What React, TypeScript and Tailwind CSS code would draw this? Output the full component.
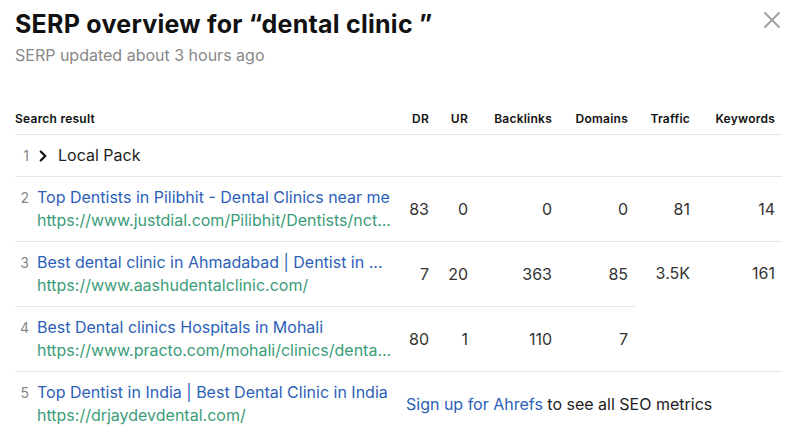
import { X, ChevronRight } from "lucide-react";

type Row = {
  n: number;
  title: string;
  url: string;
  dr: string;
  ur: string;
  backlinks: string;
  domains: string;
};

const rows: Row[] = [
  {
    n: 2,
    title: "Top Dentists in Pilibhit - Dental Clinics near me",
    url: "https://www.justdial.com/Pilibhit/Dentists/nct...",
    dr: "83",
    ur: "0",
    backlinks: "0",
    domains: "0",
  },
  {
    n: 3,
    title: "Best dental clinic in Ahmadabad | Dentist in ...",
    url: "https://www.aashudentalclinic.com/",
    dr: "7",
    ur: "20",
    backlinks: "363",
    domains: "85",
  },
  {
    n: 4,
    title: "Best Dental clinics Hospitals in Mohali",
    url: "https://www.practo.com/mohali/clinics/denta...",
    dr: "80",
    ur: "1",
    backlinks: "110",
    domains: "7",
  },
];

const cell = "border-b border-[#e6e6e6] pr-[7px] text-right align-middle text-[16px] text-[#333]";
const head = "border-b border-[#e6e6e6] pr-[7px] pb-[7px] text-right text-[12px] font-semibold tracking-[0.02em] text-[#111]";

function ResultCell({ n, title, url }: { n: number; title: string; url: string }) {
  return (
    <div className="flex py-[9px] leading-[23px]">
      <span className="w-[14px] shrink-0 text-right text-[14px] text-[#888]">{n}</span>
      <div className="ml-2 min-w-0">
        <a className="block truncate text-[16px] text-[#2c5fb8]">{title}</a>
        <div className="truncate text-[16px] text-[#3b9c7a]">{url}</div>
      </div>
    </div>
  );
}

export default function App() {
  return (
    <div className="relative h-[446px] w-[800px] bg-white px-[15px] pt-[9px] font-['Inter',sans-serif]">
      <button className="absolute right-[14px] top-[6px] text-[#a0a0a0]">
        <X className="h-[28px] w-[28px]" strokeWidth={1.6} />
      </button>

      <h1 className="text-[25px] font-bold leading-[30px] tracking-[0.01em] text-[#111]">
        SERP overview for “dental clinic ”
      </h1>
      <p className="mt-[4px] text-[16px] leading-[24px] text-[#888]">SERP updated about 3 hours ago</p>

      <table className="mt-[44px] w-[767px] table-fixed border-collapse">
        <colgroup>
          <col className="w-[385px]" />
          <col className="w-[36px]" />
          <col className="w-[39px]" />
          <col className="w-[84px]" />
          <col className="w-[76px]" />
          <col className="w-[62px]" />
          <col className="w-[85px]" />
        </colgroup>
        <thead>
          <tr className="leading-[16px]">
            <th className="border-b border-[#e6e6e6] pb-[7px] text-left text-[12px] font-semibold tracking-[0.02em] text-[#111]">
              Search result
            </th>
            <th className={head}>DR</th>
            <th className={head}>UR</th>
            <th className={head}>Backlinks</th>
            <th className={head}>Domains</th>
            <th className={head}>Traffic</th>
            <th className={head}>Keywords</th>
          </tr>
        </thead>
        <tbody>
          <tr>
            <td colSpan={7} className="border-b border-[#e6e6e6]">
              <div className="flex items-center py-[9px] leading-[23px]">
                <span className="w-[14px] text-right text-[14px] text-[#888]">1</span>
                <ChevronRight className="ml-[5px] h-[18px] w-[18px] text-[#111]" strokeWidth={3} />
                <span className="ml-[6px] text-[16px] text-[#222]">Local Pack</span>
              </div>
            </td>
          </tr>
          {rows.map((r, i) => (
            <tr key={r.n}>
              <td className="border-b border-[#e6e6e6]">
                <ResultCell n={r.n} title={r.title} url={r.url} />
              </td>
              <td className={cell}>{r.dr}</td>
              <td className={cell}>{r.ur}</td>
              <td className={cell}>{r.backlinks}</td>
              <td className={cell}>{r.domains}</td>
              {i === 0 && (
                <>
                  <td className={cell}>81</td>
                  <td className={cell}>14</td>
                </>
              )}
              {i === 1 && (
                <>
                  <td rowSpan={2} className={`${cell} !align-top pt-[20px] leading-[23px]`}>3.5K</td>
                  <td rowSpan={2} className={`${cell} !align-top pt-[20px] leading-[23px]`}>161</td>
                </>
              )}
            </tr>
          ))}
          <tr>
            <td>
              <ResultCell
                n={5}
                title="Top Dentist in India | Best Dental Clinic in India"
                url="https://drjaydevdental.com/"
              />
            </td>
            <td colSpan={6} className="pl-[6px] align-middle text-[16px] text-[#222]">
              <a className="text-[#2c5fb8]">Sign up for Ahrefs</a> to see all SEO metrics
            </td>
          </tr>
        </tbody>
      </table>
    </div>
  );
}
